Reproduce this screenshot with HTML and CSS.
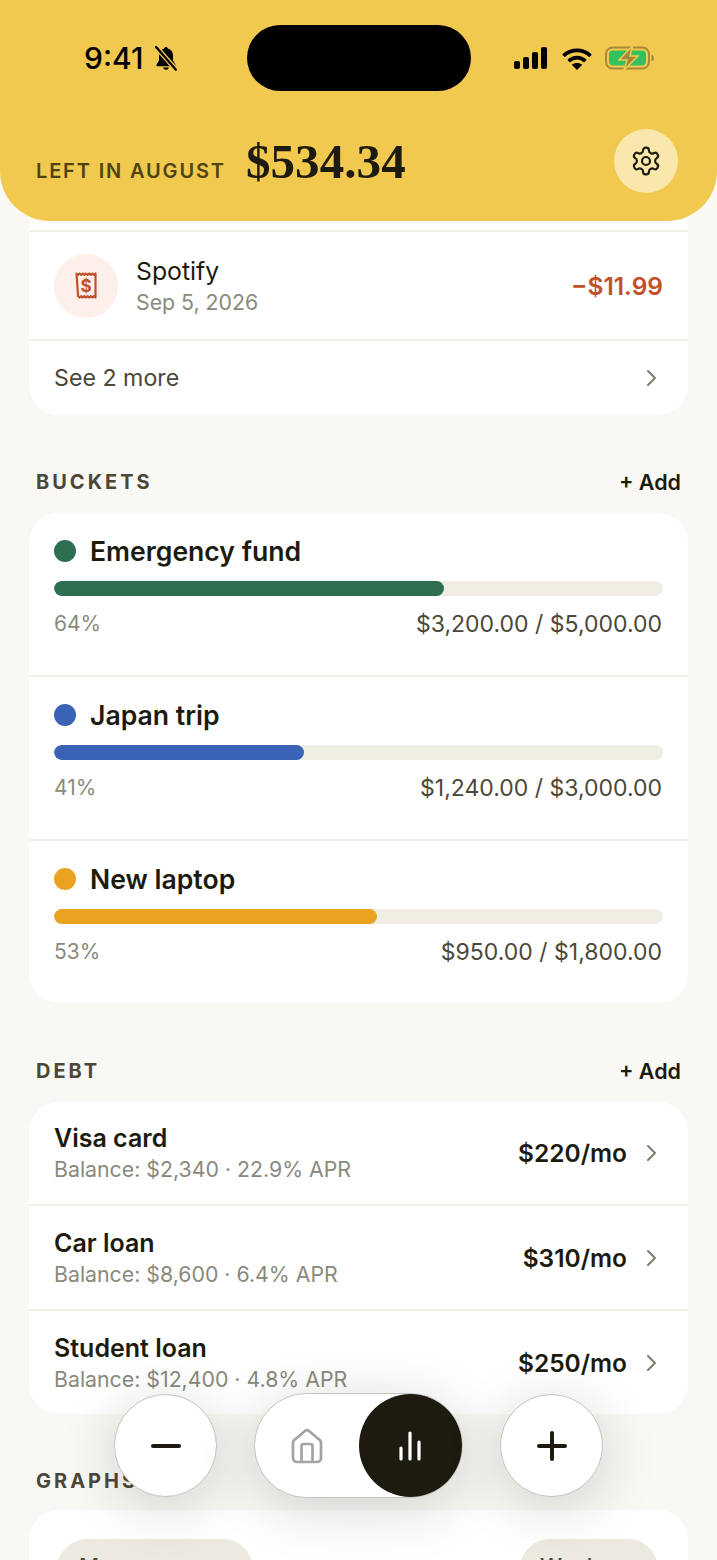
FILE: index.html
```html
<!DOCTYPE html>
<html lang="en">
<head>
    <meta charset="UTF-8">
    <meta name="viewport" content="width=device-width, initial-scale=1.0">
    <title>Budget</title>
    <link rel="stylesheet" href="styles.css">
</head>
<body>
    <header class="top-bar">
        <div class="status-bar">
            <div class="status-left">
                <span class="clock">9:41</span>
                <svg class="bell-off" viewBox="0 0 24 24" width="28" height="28">
                    <path d="M12 2.500c-.9 0-1.500.6-1.600 1.400C7.700 4.600 6 7 6 10v4.200L3.800 18c-.3.500 0 1 .6 1h15.200c.6 0 .9-.5.6-1L18 14.200V10c0-3-1.700-5.400-4.400-6.100-.1-.8-.7-1.400-1.600-1.400z" fill="#000"/>
                    <path d="M9.500 20.200a2.600 2.600 0 0 0 5 0z" fill="#000"/>
                    <path d="M3.500 2.500l17 19.500" stroke="#f2c94f" stroke-width="4.200"/>
                    <path d="M3.500 2.500l17 19.500" stroke="#000" stroke-width="2" stroke-linecap="round"/>
                </svg>
            </div>
            <div class="island"></div>
            <div class="status-right">
                <svg viewBox="0 0 36 22" width="36" height="22">
                    <rect x="1" y="14" width="6" height="8" rx="2"/>
                    <rect x="10" y="10" width="6" height="12" rx="2"/>
                    <rect x="19" y="5" width="6" height="17" rx="2"/>
                    <rect x="28" y="0" width="6" height="22" rx="2"/>
                </svg>
                <svg viewBox="0 0 30 22" width="32" height="23" fill="none" stroke="#000" stroke-width="3.600">
                    <path d="M2 8.500c7.500-7 18.500-7 26 0"/>
                    <path d="M7 13.500c4.700-4.300 11.300-4.300 16 0"/>
                    <path d="M15 22l-5-5c2.900-2.300 7.100-2.300 10 0z" fill="#000" stroke="none"/>
                </svg>
                <svg viewBox="0 0 50 24" width="50" height="24">
                    <rect x="1" y="1.500" width="43" height="21" rx="6.500" fill="none" stroke="#a5883a" stroke-width="2"/>
                    <rect x="4" y="4.500" width="37" height="15" rx="4" fill="#34c05f"/>
                    <path d="M46.500 8.500c1.800.5 2.500 2 2.500 3.500s-.7 3-2.500 3.500z" fill="#a5883a"/>
                    <path d="M27.500 0L14 14h8l-3 10 14-14h-8z" fill="#a5883a" stroke="#f2c94f" stroke-width="1.500"/>
                </svg>
            </div>
        </div>
        <div class="summary">
            <span class="summary-label">LEFT IN AUGUST</span>
            <span class="summary-value">$534.34</span>
            <button class="settings-btn">
                <svg viewBox="0 0 24 24" width="32" height="32" fill="none" stroke="#1d1b10" stroke-width="1.600" stroke-linejoin="round">
                    <path d="M12.220 2h-.44a2 2 0 0 0-2 2v.18a2 2 0 0 1-1 1.730l-.43.25a2 2 0 0 1-2 0l-.15-.08a2 2 0 0 0-2.730.73l-.22.38a2 2 0 0 0 .73 2.730l.15.1a2 2 0 0 1 1 1.720v.51a2 2 0 0 1-1 1.740l-.15.09a2 2 0 0 0-.73 2.730l.22.38a2 2 0 0 0 2.730.73l.15-.08a2 2 0 0 1 2 0l.43.25a2 2 0 0 1 1 1.730V20a2 2 0 0 0 2 2h.44a2 2 0 0 0 2-2v-.18a2 2 0 0 1 1-1.730l.43-.25a2 2 0 0 1 2 0l.15.08a2 2 0 0 0 2.730-.73l.22-.39a2 2 0 0 0-.73-2.730l-.15-.08a2 2 0 0 1-1-1.740v-.5a2 2 0 0 1 1-1.740l.15-.09a2 2 0 0 0 .73-2.730l-.22-.38a2 2 0 0 0-2.730-.73l-.15.08a2 2 0 0 1-2 0l-.43-.25a2 2 0 0 1-1-1.730V4a2 2 0 0 0-2-2z"/>
                    <circle cx="12" cy="12" r="3"/>
                </svg>
            </button>
        </div>
    </header>

    <main class="content">
        <section class="card recent-card">
            <div class="row spotify-row">
                <div class="txn-icon">
                    <svg viewBox="0 0 22 27" width="22" height="27">
                        <path d="M1.500 1.500l1.500 1.300 1.600-1.300 1.600 1.300 1.600-1.300 1.600 1.300L11 1.500l1.600 1.300 1.600-1.300 1.600 1.300 1.600-1.300 1.600 1.300 1.500-1.300v24l-1.500-1.300-1.600 1.300-1.600-1.300-1.600 1.300-1.600-1.300-1.600 1.300-1.600-1.300-1.600 1.300-1.600-1.300-1.600 1.300-1.500-1.300z" fill="none" stroke="#c2502a" stroke-width="2.200" stroke-linejoin="round"/>
                        <text x="11" y="19.500" class="txn-glyph">$</text>
                    </svg>
                </div>
                <div class="txn-text">
                    <div class="txn-name">Spotify</div>
                    <div class="txn-date">Sep 5, 2026</div>
                </div>
                <div class="txn-amount">−$11.99</div>
            </div>
            <div class="row more-row">
                <span class="more-label">See 2 more</span>
                <svg class="chevron" viewBox="0 0 12 18" width="12" height="18"><path d="M3 2l7 7-7 7"/></svg>
            </div>
        </section>

        <div class="section-head buckets-head">
            <h2>BUCKETS</h2>
            <span class="add-link">+ Add</span>
        </div>
        <section class="card">
            <div class="bucket">
                <div class="bucket-title"><span class="dot green"></span>Emergency fund</div>
                <div class="track"><div class="fill green" style="width: 64%"></div></div>
                <div class="bucket-foot"><span class="pct">64%</span><span class="amounts">$3,200.00 / $5,000.00</span></div>
            </div>
            <div class="bucket">
                <div class="bucket-title"><span class="dot blue"></span>Japan trip</div>
                <div class="track"><div class="fill blue" style="width: 41%"></div></div>
                <div class="bucket-foot"><span class="pct">41%</span><span class="amounts">$1,240.00 / $3,000.00</span></div>
            </div>
            <div class="bucket">
                <div class="bucket-title"><span class="dot amber"></span>New laptop</div>
                <div class="track"><div class="fill amber" style="width: 53%"></div></div>
                <div class="bucket-foot"><span class="pct">53%</span><span class="amounts">$950.00 / $1,800.00</span></div>
            </div>
        </section>

        <div class="section-head debt-head">
            <h2>DEBT</h2>
            <span class="add-link">+ Add</span>
        </div>
        <section class="card">
            <div class="debt">
                <div class="debt-text">
                    <div class="debt-name">Visa card</div>
                    <div class="debt-info">Balance: $2,340 · 22.9% APR</div>
                </div>
                <span class="debt-pay">$220/mo</span>
                <svg class="chevron" viewBox="0 0 12 18" width="12" height="18"><path d="M3 2l7 7-7 7"/></svg>
            </div>
            <div class="debt">
                <div class="debt-text">
                    <div class="debt-name">Car loan</div>
                    <div class="debt-info">Balance: $8,600 · 6.4% APR</div>
                </div>
                <span class="debt-pay">$310/mo</span>
                <svg class="chevron" viewBox="0 0 12 18" width="12" height="18"><path d="M3 2l7 7-7 7"/></svg>
            </div>
            <div class="debt">
                <div class="debt-text">
                    <div class="debt-name">Student loan</div>
                    <div class="debt-info">Balance: $12,400 · 4.8% APR</div>
                </div>
                <span class="debt-pay">$250/mo</span>
                <svg class="chevron" viewBox="0 0 12 18" width="12" height="18"><path d="M3 2l7 7-7 7"/></svg>
            </div>
        </section>

        <div class="section-head graphs-head">
            <h2>GRAPHS</h2>
        </div>
        <section class="card graphs-card">
            <span class="range-tab wide">Money over</span>
            <span class="range-tab">Week</span>
        </section>
    </main>

    <nav class="bottom-nav">
        <button class="round-btn">
            <svg viewBox="0 0 30 30" width="30" height="30"><path d="M2 15h26" class="nav-stroke"/></svg>
        </button>
        <div class="nav-pill">
            <span class="nav-item">
                <svg viewBox="0 0 32 36" width="32" height="36" fill="none" stroke="#a3a3a0" stroke-width="2.700" stroke-linejoin="round">
                    <path d="M2 14.500c0-1 .4-1.700 1-2.300L14 3c1.200-1 2.800-1 4 0l11 9.200c.6.600 1 1.300 1 2.300V30a4 4 0 0 1-4 4H6a4 4 0 0 1-4-4z"/>
                    <path d="M10.500 34V18a2 2 0 0 1 2-2h7a2 2 0 0 1 2 2v16"/>
                </svg>
            </span>
            <span class="nav-item active">
                <svg viewBox="0 0 24 30" width="24" height="30" fill="none" stroke="#fff" stroke-width="3.200" stroke-linecap="round">
                    <path d="M3 17v11M12 2v26M21 11v17"/>
                </svg>
            </span>
        </div>
        <button class="round-btn">
            <svg viewBox="0 0 30 30" width="30" height="30"><path d="M2 15h26M15 2v26" class="nav-stroke"/></svg>
        </button>
    </nav>
</body>
</html>
```

FILE: styles.css
```css
* {
    box-sizing: border-box;
}
html, body {
    margin: 0;
    height: 1560px;
    overflow: hidden;
}
body {
    position: relative;
    font-family: Inter, "Liberation Sans", sans-serif;
    background-color: #f9f8f4;
    color: #1d1b10;
}

/* Yellow header sits over the scrolled content */
.top-bar {
    position: absolute;
    top: 0;
    left: 0;
    right: 0;
    z-index: 5;
    height: 221px;
    padding: 25px 39px 0 36px;
    background-color: #f2c94f;
    border-radius: 0 0 50px 50px;
}
.status-bar {
    display: flex;
    align-items: center;
    height: 66px;
}
.status-left {
    display: flex;
    align-items: center;
    gap: 9px;
    width: 211px;
    padding-left: 48px;
}
.clock {
    font-size: 30px;
    font-weight: 500;
    color: #000;
}
.bell-off {
    flex: none;
}
.island {
    width: 224px;
    height: 66px;
    background-color: #000;
    border-radius: 33px;
}
.status-right {
    display: flex;
    align-items: center;
    gap: 12px;
    margin-left: 42px;
}
.status-right svg {
    flex: none;
}
.summary {
    display: flex;
    align-items: center;
    margin-top: 38px;
}
.summary-label {
    font-size: 20px;
    font-weight: 600;
    letter-spacing: 1.850px;
    color: #4e4413;
    margin-top: 19px;
}
.summary-value {
    font-family: "Liberation Serif", serif;
    font-size: 49px;
    font-weight: 700;
    margin-left: 20px;
    letter-spacing: .1px;
    color: #1d1b10;
}
.settings-btn {
    display: flex;
    align-items: center;
    justify-content: center;
    width: 64px;
    height: 64px;
    margin-left: auto;
    padding: 0;
    border: none;
    border-radius: 50%;
    background-color: #f9e7ab;
}

.content {
    padding: 180px 29px 0;
}
.card {
    background-color: #fff;
    border-radius: 30px;
}
.recent-card {
    padding-top: 50px;
    border-radius: 0 0 30px 30px;
}
.row {
    display: flex;
    align-items: center;
    padding: 0 25px;
    border-top: 2px solid #f1efe8;
}
.spotify-row {
    height: 109px;
}
.more-row {
    justify-content: space-between;
    height: 76px;
}
.txn-icon {
    display: flex;
    align-items: center;
    justify-content: center;
    width: 64px;
    height: 64px;
    border-radius: 50%;
    background-color: #fdf0eb;
}
.txn-glyph {
    font-size: 17px;
    font-weight: 700;
    fill: #c2502a;
    text-anchor: middle;
}
.txn-text {
    margin-left: 18px;
    padding-top: 3px;
}
.txn-name {
    font-size: 24.800px;
    line-height: 30px;
    color: #1d1b10;
}
.txn-date {
    font-size: 21.300px;
    line-height: 32px;
    color: #8a8a7c;
}
.txn-amount {
    margin-left: auto;
    font-size: 24.500px;
    font-weight: 600;
    color: #c2502a;
}
.more-label {
    font-size: 23.200px;
    color: #4b4839;
}
.chevron {
    fill: none;
    stroke: #7c7c72;
    stroke-width: 2;
    stroke-linecap: round;
    stroke-linejoin: round;
    flex: none;
}
.more-row .chevron {
    margin-right: 6px;
}

.section-head {
    display: flex;
    align-items: center;
    justify-content: space-between;
    height: 30px;
    padding: 0 7px;
}
.section-head h2 {
    margin: 0;
    font-size: 20px;
    font-weight: 700;
    letter-spacing: 3px;
    color: #4b4839;
}
.buckets-head {
    margin-top: 52px;
    margin-bottom: 16px;
}
.debt-head {
    margin-top: 53px;
    margin-bottom: 16px;
}
.graphs-head {
    margin-top: 52px;
    margin-bottom: 14px;
}
.add-link {
    font-size: 21.500px;
    font-weight: 600;
    color: #1d1b10;
}

.bucket {
    height: 164px;
    padding: 20px 25px 0;
    border-top: 2px solid #f1efe8;
}
.bucket:first-child {
    height: 162px;
    border-top: none;
}
.bucket-title {
    display: flex;
    align-items: center;
    gap: 14px;
    font-size: 26.600px;
    font-weight: 600;
    line-height: 36px;
}
.dot {
    width: 22px;
    height: 22px;
    border-radius: 50%;
}
.track {
    height: 15px;
    margin-top: 12px;
    border-radius: 8px;
    background-color: #f0eee3;
    overflow: hidden;
}
.fill {
    height: 100%;
    border-radius: 8px;
}
.green { background-color: #2e6e50; }
.blue { background-color: #3a62b5; }
.amber { background-color: #e9a320; }
.bucket-foot {
    display: flex;
    justify-content: space-between;
    margin-top: 12px;
    line-height: 32px;
}
.pct {
    font-size: 21px;
    color: #8a8a7c;
}
.amounts {
    font-size: 23px;
    margin-right: 1px;
    color: #4b4839;
}

.debt {
    display: flex;
    align-items: center;
    height: 105px;
    padding: 0 31px 0 25px;
    border-top: 2px solid #f1efe8;
}
.debt:first-child {
    height: 102px;
    border-top: none;
}
.debt-text {
    flex: 1;
    padding-top: 2px;
}
.debt-name {
    font-size: 25px;
    font-weight: 600;
    line-height: 31px;
}
.debt-info {
    font-size: 21.300px;
    line-height: 31px;
    color: #8a8a7c;
}
.debt-pay {
    font-size: 24.500px;
    font-weight: 600;
    margin-right: 18px;
}

.graphs-card {
    display: flex;
    justify-content: space-between;
    height: 120px;
    padding: 29px 30px 0 28px;
}
.range-tab {
    width: 138px;
    height: 70px;
    padding: 14px 20px;
    font-size: 22px;
    font-weight: 500;
    color: #4b4839;
    background-color: #ece9e0;
    border-radius: 30px;
}
.range-tab.wide {
    width: 196px;
    padding-left: 22px;
}

/* Floating controls */
.bottom-nav {
    position: absolute;
    left: 0;
    right: 0;
    top: 1393px;
    z-index: 6;
    display: flex;
    align-items: center;
    justify-content: center;
    gap: 37px;
    height: 105px;
}
.round-btn {
    display: flex;
    align-items: center;
    justify-content: center;
    width: 103px;
    height: 103px;
    padding: 0;
    background-color: #fff;
    border: 1.500px solid #c4c4c0;
    border-radius: 50%;
    box-shadow: 0 10px 56px rgba(30, 28, 16, .18);
}
.nav-pill {
    display: flex;
    align-items: center;
    width: 209px;
    height: 105px;
    background-color: #fff;
    border: 1.500px solid #c4c4c0;
    border-radius: 53px;
    box-shadow: 0 10px 56px rgba(30, 28, 16, .18);
}
.nav-item {
    display: flex;
    align-items: center;
    justify-content: center;
    width: 104px;
    height: 103px;
}
.nav-item.active {
    background-color: #1d1b10;
    border-radius: 50%;
}
.nav-stroke {
    fill: none;
    stroke: #1d1b10;
    stroke-width: 4;
    stroke-linecap: round;
}
```
